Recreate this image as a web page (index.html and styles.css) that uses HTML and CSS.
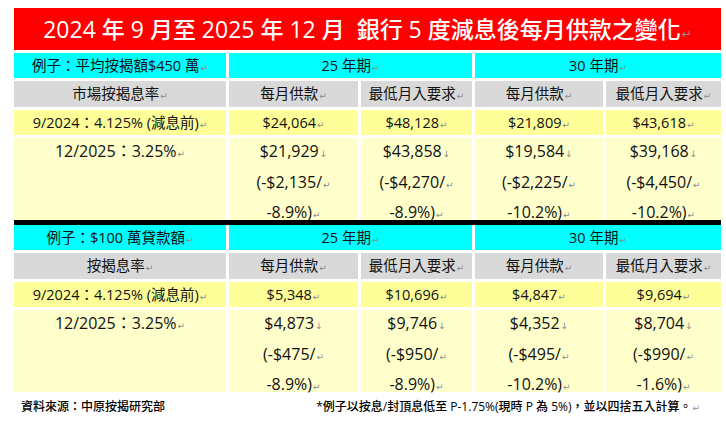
FILE: index.html
```html
<!DOCTYPE html>
<html lang="zh-Hant">
<head>
<meta charset="utf-8">
<title>減息後每月供款之變化</title>
<link rel="stylesheet" href="styles.css">
</head>
<body>
<div class="sheet">
  <div class="title">2024 年 9 月至 2025 年 12 月&nbsp; 銀行 5 度減息後每月供款之變化<span class="pm">↵</span></div>

  <div class="grid">
    <div class="cell cyan">例子：平均按揭額$450 萬<span class="pm">↵</span></div>
    <div class="cell cyan span2">25 年期<span class="pm">↵</span></div>
    <div class="cell cyan span2">30 年期<span class="pm">↵</span></div>

    <div class="cell gray">市場按揭息率<span class="pm">↵</span></div>
    <div class="cell gray">每月供款<span class="pm">↵</span></div>
    <div class="cell gray">最低月入要求<span class="pm">↵</span></div>
    <div class="cell gray">每月供款<span class="pm">↵</span></div>
    <div class="cell gray">最低月入要求<span class="pm">↵</span></div>

    <div class="cell yellow">9/2024：4.125% (減息前)<span class="pm">↵</span></div>
    <div class="cell yellow">$24,064<span class="pm">↵</span></div>
    <div class="cell yellow">$48,128<span class="pm">↵</span></div>
    <div class="cell yellow">$21,809<span class="pm">↵</span></div>
    <div class="cell yellow">$43,618<span class="pm">↵</span></div>

    <div class="cell light">12/2025：3.25%<span class="pm">↵</span></div>
    <div class="cell light">$21,929<span class="pm">↓</span><br>(-$2,135/<span class="pm">↵</span><br>-8.9%)<span class="pm">↵</span></div>
    <div class="cell light">$43,858<span class="pm">↓</span><br>(-$4,270/<span class="pm">↵</span><br>-8.9%)<span class="pm">↵</span></div>
    <div class="cell light">$19,584<span class="pm">↓</span><br>(-$2,225/<span class="pm">↵</span><br>-10.2%)<span class="pm">↵</span></div>
    <div class="cell light">$39,168<span class="pm">↓</span><br>(-$4,450/<span class="pm">↵</span><br>-10.2%)<span class="pm">↵</span></div>
  </div>

  <div class="rule"></div>

  <div class="grid">
    <div class="cell cyan">例子：$100 萬貸款額<span class="pm">↵</span></div>
    <div class="cell cyan span2">25 年期<span class="pm">↵</span></div>
    <div class="cell cyan span2">30 年期<span class="pm">↵</span></div>

    <div class="cell gray">按揭息率<span class="pm">↵</span></div>
    <div class="cell gray">每月供款<span class="pm">↵</span></div>
    <div class="cell gray">最低月入要求<span class="pm">↵</span></div>
    <div class="cell gray">每月供款<span class="pm">↵</span></div>
    <div class="cell gray">最低月入要求<span class="pm">↵</span></div>

    <div class="cell yellow">9/2024：4.125% (減息前)<span class="pm">↵</span></div>
    <div class="cell yellow">$5,348<span class="pm">↵</span></div>
    <div class="cell yellow">$10,696<span class="pm">↵</span></div>
    <div class="cell yellow">$4,847<span class="pm">↵</span></div>
    <div class="cell yellow">$9,694<span class="pm">↵</span></div>

    <div class="cell light">12/2025：3.25%<span class="pm">↵</span></div>
    <div class="cell light">$4,873<span class="pm">↓</span><br>(-$475/<span class="pm">↵</span><br>-8.9%)<span class="pm">↵</span></div>
    <div class="cell light">$9,746<span class="pm">↓</span><br>(-$950/<span class="pm">↵</span><br>-8.9%)<span class="pm">↵</span></div>
    <div class="cell light">$4,352<span class="pm">↓</span><br>(-$495/<span class="pm">↵</span><br>-10.2%)<span class="pm">↵</span></div>
    <div class="cell light">$8,704<span class="pm">↓</span><br>(-$990/<span class="pm">↵</span><br>-1.6%)<span class="pm">↵</span></div>
  </div>

  <div class="footer">
    <span>資料來源：中原按揭研究部</span>
    <span>*例子以按息/封頂息低至 P-1.75%(現時 P 為 5%)，並以四捨五入計算。<span class="pm">↵</span></span>
  </div>
</div>
</body>
</html>
```

FILE: styles.css
```css
html, body {
  margin: 0;
  padding: 0;
  background: #ffffff;
}

body {
  font-family: "Open Sans", "Noto Sans CJK TC", sans-serif;
  color: #000000;
}

.sheet {
  width: 707px;
  margin: 8px 0 0 14px;
}

.title {
  height: 42px;
  background: #ff0000;
  color: #ffffff;
  font-size: 23px;
  font-weight: 500;
  line-height: 42px;
  text-align: center;
  white-space: nowrap;
  margin-bottom: 3px;
}

.grid {
  display: grid;
  grid-template-columns: 212px 129px 111px 128px 115px;
  grid-template-rows: 25px 26px 25px 82px;
  gap: 3px;
}

.cell {
  text-align: center;
  font-size: 14.5px;
  line-height: 25px;
  white-space: nowrap;
  color: #111111;
}

.span2 {
  grid-column: span 2;
}

.cyan {
  background: #00ffff;
}

.gray {
  background: #d9d9d9;
  line-height: 26px;
}

.yellow {
  background: #ffff99;
}

.light {
  background: #ffffcc;
  font-size: 16px;
  line-height: 27.5px;
}

.rule {
  height: 5px;
  background: #000000;
}

.pm {
  font-family: "DejaVu Sans", sans-serif;
  font-size: 9px;
  font-weight: 400;
  color: #8c8c8c;
  margin-left: 1px;
}

.title .pm {
  font-size: 12px;
}

.footer {
  display: flex;
  justify-content: space-between;
  padding: 6px 21px 0 7px;
  font-size: 12px;
  font-weight: 500;
  line-height: 18px;
  white-space: nowrap;
}
```
